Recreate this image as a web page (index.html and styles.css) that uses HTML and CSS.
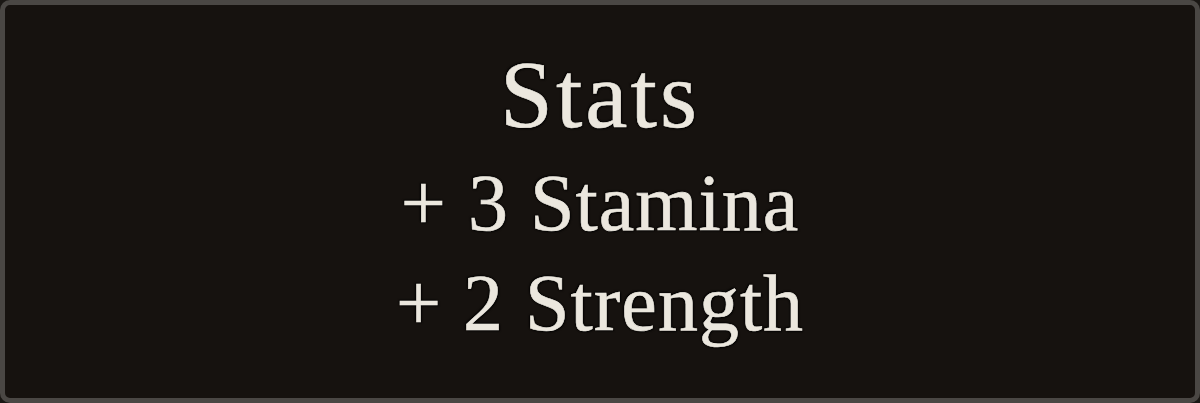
FILE: index.html
```html
<!DOCTYPE html>
<html>
<head>
<meta charset="utf-8">
<link rel="stylesheet" href="styles.css">
</head>
<body>
<div class="panel">
  <div class="title">Stats</div>
  <div class="stats">
    <div class="stat">+ 3 Stamina</div>
    <div class="stat">+ 2 Strength</div>
  </div>
</div>
</body>
</html>
```
FILE: styles.css
```css
html, body {
  margin: 0;
  padding: 0;
  background: #1a1714;
}
.panel {
  box-sizing: border-box;
  width: 1200px;
  height: 403px;
  border: 5px solid #4a4744;
  border-radius: 10px;
  background: #16120f;
  padding-top: 38px;
  text-align: center;
  font-family: "Liberation Serif", "DejaVu Serif", serif;
  color: #ebe7de;
  -webkit-text-stroke: 0.6px #ebe7de;
  text-shadow: 0 0 2px #000, 1px 1px 2px #000, -1px -1px 2px #000;
}
.title {
  font-size: 95px;
  line-height: 104px;
  letter-spacing: 3px;
}
.stats {
  margin-top: 6px;
}
.stat {
  font-size: 80px;
  line-height: 100px;
  letter-spacing: 1px;
}
```
